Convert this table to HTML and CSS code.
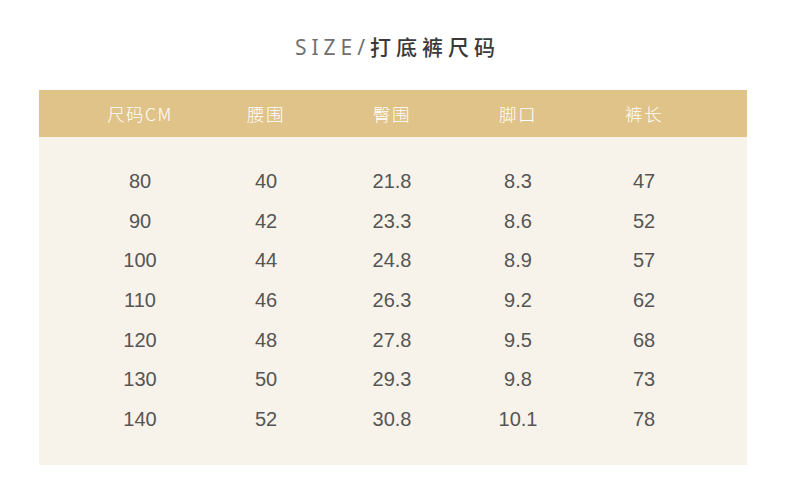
FILE: index.html
```html
<!DOCTYPE html>
<html lang="zh">
<head>
<meta charset="utf-8">
<link rel="stylesheet" href="styles.css">
</head>
<body>
<div class="page">
  <h1 class="title"><span class="en">SIZE/</span><span class="cn">打底裤尺码</span></h1>
  <div class="table">
    <div class="row head">
      <div>尺码CM</div><div>腰围</div><div>臀围</div><div>脚口</div><div>裤长</div>
    </div>
    <div class="body">
      <div class="row"><div>80</div><div>40</div><div>21.8</div><div>8.3</div><div>47</div></div>
      <div class="row"><div>90</div><div>42</div><div>23.3</div><div>8.6</div><div>52</div></div>
      <div class="row"><div>100</div><div>44</div><div>24.8</div><div>8.9</div><div>57</div></div>
      <div class="row"><div>110</div><div>46</div><div>26.3</div><div>9.2</div><div>62</div></div>
      <div class="row"><div>120</div><div>48</div><div>27.8</div><div>9.5</div><div>68</div></div>
      <div class="row"><div>130</div><div>50</div><div>29.3</div><div>9.8</div><div>73</div></div>
      <div class="row"><div>140</div><div>52</div><div>30.8</div><div>10.1</div><div>78</div></div>
    </div>
  </div>
</div>
</body>
</html>
```
FILE: styles.css
```css
html, body { margin: 0; padding: 0; background: #fff; }
.page {
  width: 790px;
  height: 489px;
  padding-top: 32px;
  box-sizing: border-box;
}
.title {
  margin: 0;
  height: 58px;
  text-align: center;
  font-weight: normal;
  font-size: 21px;
  line-height: 28px;
  letter-spacing: 5px;
  padding-left: 5px;
}
.title .en {
  font-family: "Noto Sans", "Liberation Sans", sans-serif;
  font-weight: 400;
  color: #707070;
}
.title .cn {
  font-family: "Noto Sans CJK SC", sans-serif;
  font-weight: 500;
  color: #3a3a3a;
}
.table {
  margin-left: 39px;
  width: 708px;
}
.row {
  display: grid;
  grid-template-columns: repeat(5, 126px);
  padding-left: 38px;
  text-align: center;
}
.head {
  background: #e0c388;
  height: 47px;
  align-items: center;
  color: #fff;
  font-family: "Noto Sans CJK SC", sans-serif;
  font-weight: 300;
  font-size: 17.5px;
  letter-spacing: 1.5px;
}
.body {
  background: #f7f3ea;
  padding-top: 25px;
  padding-bottom: 26px;
}
.body .row {
  height: 39.6px;
  align-items: center;
  font-family: "Liberation Sans", Arial, sans-serif;
  font-size: 20px;
  color: #555;
}
```
